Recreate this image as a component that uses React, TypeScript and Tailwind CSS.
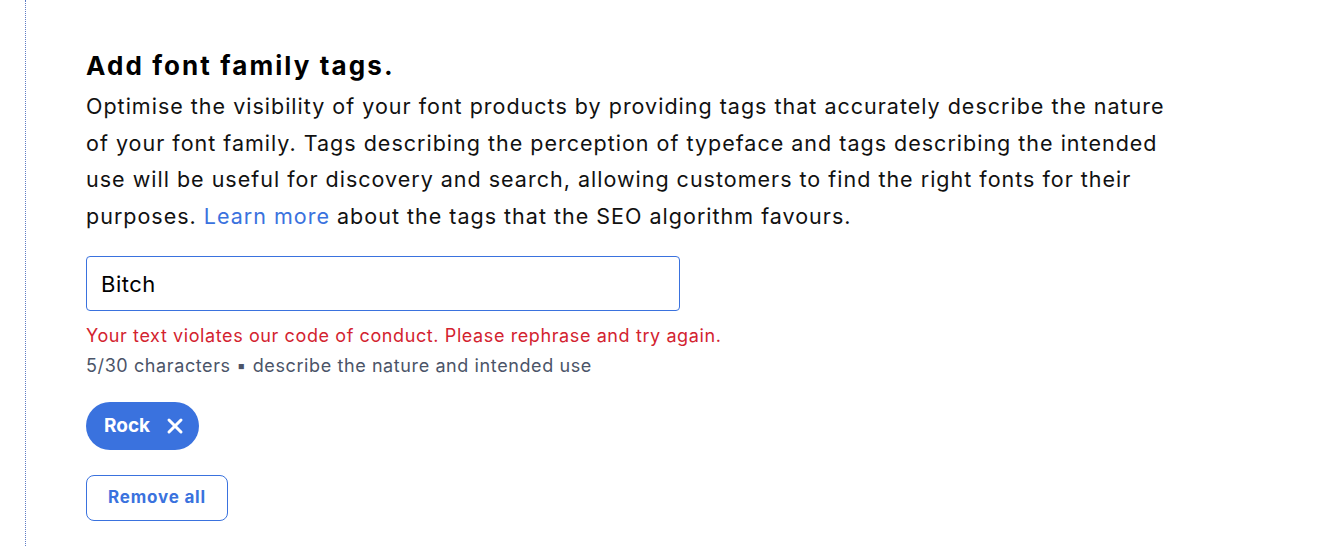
import { X } from 'lucide-react'

export default function App() {
  return (
    <div className="flex min-h-[546px] w-full bg-white" style={{ fontFamily: 'Inter, "Noto Sans", sans-serif' }}>
      <div className="ml-[25px] border-l border-dotted border-[#5f7cc4]" />
      <main className="flex-1 pl-[60px] pt-[46px]">
        <h2 className="text-[26px] font-bold leading-[40px] tracking-[2.1px] text-black">Add font family tags.</h2>
        <p className="mt-[2px] text-[21.5px] leading-[36.5px] tracking-[1px] text-[#111]">
          Optimise the visibility of your font products by providing tags that accurately describe the nature
          <br />
          of your font family. Tags describing the perception of typeface and tags describing the intended
          <br />
          use will be useful for discovery and search, allowing customers to find the right fonts for their
          <br />
          purposes. <a className="text-[#3a72de]">Learn more</a> about the tags that the SEO algorithm favours.
        </p>

        <input
          defaultValue="Bitch"
          className="mt-[22px] block h-[55px] w-[594px] rounded-[4px] border border-[#3a72de] px-[14px] text-[22px] tracking-[0.5px] text-black outline-none"
        />
        <p className="mt-[12px] text-[18px] leading-[26px] tracking-[0.6px] text-[#d3232f]">
          Your text violates our code of conduct. Please rephrase and try again.
        </p>
        <p className="mt-[4px] text-[18px] leading-[26px] tracking-[0.6px] text-[#4b5468]">
          5/30 characters ▪ describe the nature and intended use
        </p>

        <div className="mt-[23px] flex">
          <span className="flex h-[48px] items-center gap-[13px] rounded-full bg-[#3a72de] pl-[18px] pr-[12px] text-[19px] font-bold text-white">
            Rock
            <X size={24} strokeWidth={3} />
          </span>
        </div>

        <button className="mt-[25px] h-[46px] w-[142px] rounded-[8px] border border-[#3a72de] text-[17px] font-bold tracking-[0.8px] text-[#3a72de]">
          Remove all
        </button>
      </main>
    </div>
  )
}
